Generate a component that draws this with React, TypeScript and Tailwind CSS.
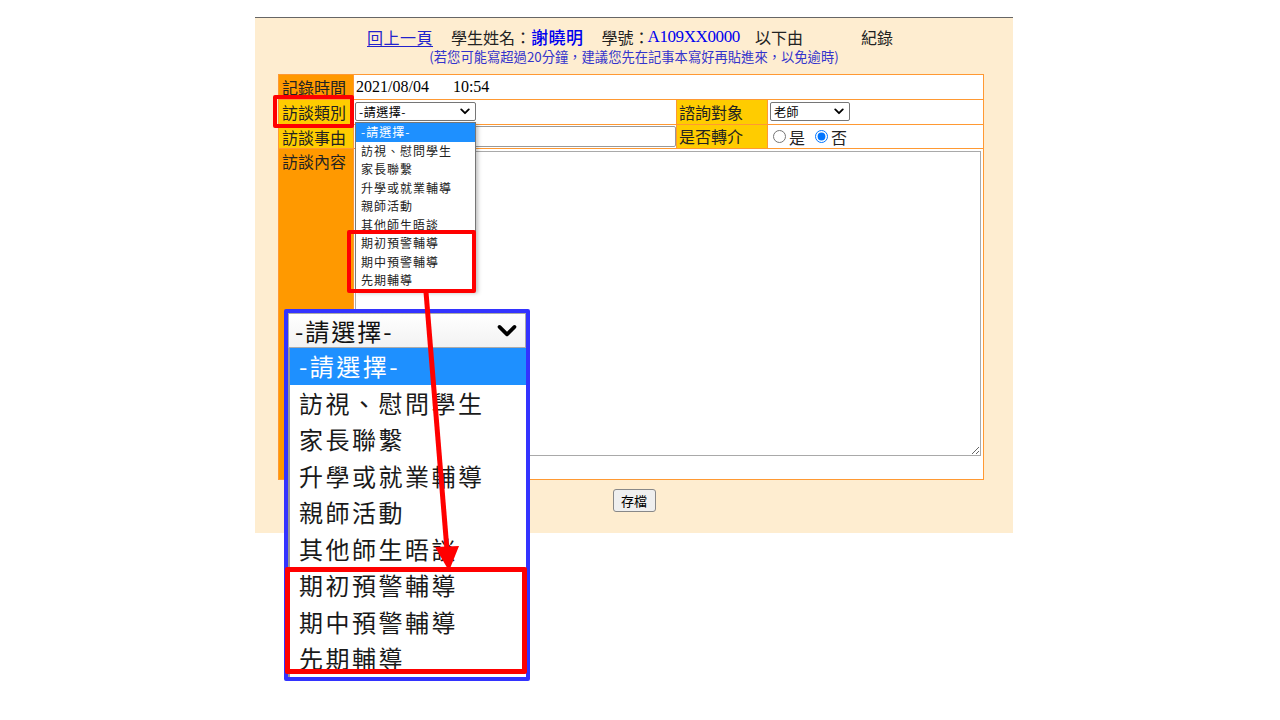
const CJK = "font-['Microsoft_JhengHei','Noto_Sans_CJK_TC',sans-serif]";

const options = [
  "-請選擇-",
  "訪視、慰問學生",
  "家長聯繫",
  "升學或就業輔導",
  "親師活動",
  "其他師生晤談",
  "期初預警輔導",
  "期中預警輔導",
  "先期輔導",
];

const Chevron = ({ className }: { className: string }) => (
  <svg className={className} viewBox="0 0 12 8" fill="none" stroke="currentColor" strokeWidth={2.2} strokeLinecap="round" strokeLinejoin="round">
    <path d="M1.5 1.5 6 6l4.5-4.5" />
  </svg>
);

// closed select box, drawn by hand so the size stays fixed
const FakeSelect = ({ value, width }: { value: string; width: string }) => (
  <div className={`${width} h-[19px] flex items-center justify-between border border-[#767676] rounded-[2px] bg-white pl-[3px] pr-[5px] text-[12px] tracking-[0.5px] text-black`}>
    <span>{value}</span>
    <Chevron className="w-[10px] h-[7px] text-black" />
  </div>
);

const Label = ({ text, tone }: { text: string; tone: "orange" | "yellow" }) => (
  <div
    className={`${tone === "orange" ? "bg-[#ff9900]" : "bg-[#ffcc00]"} w-[75px] shrink-0 border-r border-[#ff9933] pl-[3px] text-[16px] leading-[24px] text-[#222]`}
  >
    {text}
  </div>
);

export default function App() {
  return (
    <div className={`relative w-[1280px] h-[720px] overflow-hidden bg-white ${CJK}`}>
      {/* Form panel */}
      <div className="ml-[255px] mt-[17px] w-[758px] h-[516px] bg-[#feedd0] border-t border-[#666]">
        <div className="pt-[7px] h-[30px] flex items-center text-[16px] leading-[22px] text-[#222]">
          <span className="ml-[112px] text-[#2222cc] underline underline-offset-2 tracking-[0.5px]">回上一頁</span>
          <span className="ml-[18px]">學生姓名：</span>
          <span className="text-[#0000ee] text-[17px] font-medium tracking-[0.5px]">謝曉明</span>
          <span className="ml-[18px]">學號：</span>
          <span className="-ml-[2px] text-[#0000ee] font-['Liberation_Serif',serif] text-[17px] tracking-[-0.4px]">A109XX0000</span>
          <span className="ml-[15px]">以下由</span>
          <span className="ml-[58px]">紀錄</span>
        </div>
        <div className="h-[18px] text-center text-[13.3px] leading-[18px] text-[#3333cc]">
          (若您可能寫超過20分鐘，建議您先在記事本寫好再貼進來，以免逾時)
        </div>

        {/* Record table */}
        <div className="ml-[23px] mt-[8px] w-[706px] border border-[#ff9933] bg-white">
          <div className="flex h-[25px] border-b border-[#ff9933]">
            <Label text="記錄時間" tone="orange" />
            <div className="pl-[2px] font-['Liberation_Serif',serif] text-[16px] leading-[24px] text-black">
              2021/08/04<span className="ml-[24px]">10:54</span>
            </div>
          </div>
          <div className="flex h-[25px] border-b border-[#ff9933]">
            <Label text="訪談類別" tone="yellow" />
            <div className="w-[323px] shrink-0 border-r border-[#ff9933] pl-[1px] pt-[2px]">
              <FakeSelect value="-請選擇-" width="w-[121px]" />
            </div>
            <div className="w-[91px] shrink-0 bg-[#ffcc00] border-r border-[#ff9933] pl-[2px] text-[16px] leading-[24px] text-[#222]">諮詢對象</div>
            <div className="pl-[2px] pt-[2px]">
              <FakeSelect value="老師" width="w-[80px]" />
            </div>
          </div>
          <div className="flex h-[24px] border-b border-[#ff9933]">
            <Label text="訪談事由" tone="yellow" />
            <div className="w-[323px] shrink-0 border-r border-[#ff9933] pl-[1px] pt-[1px]">
              <div className="w-[321px] h-[21px] border border-[#999] rounded-[2px] bg-white" />
            </div>
            <div className="w-[91px] shrink-0 bg-[#ffcc00] border-r border-[#ff9933] pl-[2px] text-[16px] leading-[23px] text-[#222]">是否轉介</div>
            <div className="flex items-center pl-[5px] text-[16px] text-[#222]">
              <input type="radio" name="ref" className="w-[13px] h-[13px] m-0" readOnly />
              <span className="ml-[3px]">是</span>
              <input type="radio" name="ref" className="ml-[10px] w-[13px] h-[13px] m-0" defaultChecked />
              <span className="ml-[3px]">否</span>
            </div>
          </div>
          <div className="flex h-[330px]">
            <Label text="訪談內容" tone="orange" />
            <div className="flex-1 pl-[1px] pt-[2px]">
              <textarea className="block w-[626px] h-[305px] border border-[#a9a9a9] bg-white" readOnly />
            </div>
          </div>
        </div>

        <div className="flex justify-center mt-[9px]">
          <button className="w-[43px] h-[23px] border border-[#888] rounded-[3px] bg-[#efefef] text-[13px] text-black leading-none">
            存檔
          </button>
        </div>
      </div>

      {/* Annotation: red box on the 訪談類別 label */}
      <div className="absolute left-[273px] top-[95px] w-[81px] h-[33px] border-[4px] border-[#ff0000] rounded-[2px]" />

      {/* Open dropdown list */}
      <div className="absolute left-[355px] top-[122px] w-[121px] h-[169px] border border-[#767676] bg-white shadow-[2px_2px_4px_rgba(0,0,0,0.25)] text-[12px] tracking-[1px] text-[#222]">
        {options.map((o, i) => (
          <div key={o} className={`h-[18.5px] leading-[18.5px] pl-[5px] ${i === 0 ? "bg-[#1e90ff] text-white" : ""}`}>
            {o}
          </div>
        ))}
      </div>
      <div className="absolute left-[347px] top-[230px] w-[129px] h-[63px] border-[4px] border-[#ff0000] rounded-[2px]" />

      {/* Zoomed-in copy of the dropdown */}
      <div className="absolute left-[284px] top-[309px] w-[246px] h-[372px] border-[4px] border-[#3333ff] rounded-[2px] bg-white">
        <div className="h-[35px] flex items-center justify-between border border-[#aaa] bg-gradient-to-b from-white to-[#f2f2f2] pl-[6px] pr-[8px] text-[24px] tracking-[2px] text-[#111]">
          <span>-請選擇-</span>
          <Chevron className="w-[20px] h-[14px] text-black" />
        </div>
        <div className="border-l-2 border-[#999] text-[24px] tracking-[2.5px] text-[#1a1a1a]">
          {options.map((o, i) => (
            <div key={o} className={`h-[36.5px] leading-[36.5px] pl-[9px] ${i === 0 ? "bg-[#1e90ff] text-white" : ""}`}>
              {o}
            </div>
          ))}
        </div>
      </div>

      {/* Arrow */}
      <svg className="absolute left-0 top-0 w-[1280px] h-[720px] pointer-events-none" viewBox="0 0 1280 720">
        <line x1="426" y1="292" x2="447" y2="550" stroke="#ff0000" strokeWidth="5" />
        <polygon points="435,547 459,546 449,571" fill="#ff0000" />
      </svg>

      <div className="absolute left-[285px] top-[567px] w-[242px] h-[107px] border-[5px] border-[#ff0000] rounded-[2px]" />
    </div>
  );
}
